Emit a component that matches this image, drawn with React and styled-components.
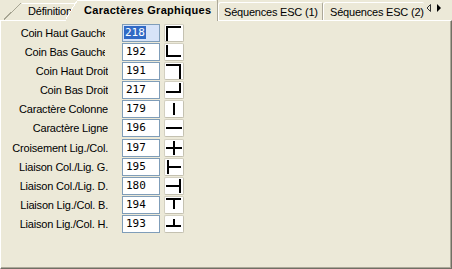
import React from 'react';
import styled, { createGlobalStyle } from 'styled-components';

const BG = '#ECE9D8';

const GlobalStyle = createGlobalStyle`
  html, body {
    margin: 0;
    padding: 0;
    background: ${BG};
  }
  body {
    font-family: "Liberation Sans", Arial, sans-serif;
    font-size: 11px;
    color: #000;
  }
`;

const ROWS = [
  { label: 'Coin Haut Gauche', code: '218', clipped: true, selected: true, bars: [[1, 1, 2, 15], [1, 1, 15, 2]] },
  { label: 'Coin Bas Gauche', code: '192', clipped: true, bars: [[1, 1, 2, 12], [1, 11, 15, 2]] },
  { label: 'Coin Haut Droit', code: '191', bars: [[1, 1, 15, 2], [14, 1, 2, 15]] },
  { label: 'Coin Bas Droit', code: '217', bars: [[14, 1, 2, 10], [1, 9, 15, 2]] },
  { label: 'Caractère Colonne', code: '179', bars: [[8, 2, 2, 12]] },
  { label: 'Caractère Ligne', code: '196', bars: [[1, 7, 16, 2]] },
  { label: 'Croisement Lig./Col.', code: '197', bars: [[1, 7, 16, 2], [8, 1, 2, 14]] },
  { label: 'Liaison Col./Lig. G.', code: '195', bars: [[2, 1, 2, 14], [2, 7, 14, 2]] },
  { label: 'Liaison Col./Lig. D.', code: '180', bars: [[14, 1, 2, 14], [1, 7, 14, 2]] },
  { label: 'Liaison Lig./Col. B.', code: '194', bars: [[1, 1, 15, 2], [8, 1, 2, 11]] },
  { label: 'Liaison Lig./Col. H.', code: '193', bars: [[8, 3, 2, 8], [1, 9, 15, 2]] },
];

const Window = styled.div`
  width: 452px;
  height: 269px;
  background: ${BG};
  overflow: hidden;
`;

const TabStrip = styled.div`
  display: flex;
  align-items: flex-end;
  height: 20px;
`;

const Tab = styled.div`
  position: relative;
  flex: none;
  box-sizing: border-box;
  height: 18px;
  padding: 3px 0 0 6px;
  white-space: nowrap;
  overflow: hidden;
  letter-spacing: -0.2px;
  background: ${BG};
  border-top: 1px solid #fff;
  border-left: 1px solid #fff;
  border-right: 1px solid #ACA899;
  border-top-left-radius: 3px;
  border-top-right-radius: 2px;
`;

const SlantTab = styled(Tab)`
  margin-left: 4px;
  width: 72px;
  height: 17px;
  padding: 2px 0 0 24px;
  border: none;
  border-radius: 0;
  background:
    linear-gradient(#fff, #fff) no-repeat 18px 0 / calc(100% - 18px) 1px,
    linear-gradient(to bottom right, transparent calc(50% - 1px), #A7A593 calc(50% - 1px), #A7A593 50%, transparent 50%) no-repeat 0 0 / 18px 100%;
`;

const ActiveTab = styled(Tab)`
  z-index: 1;
  margin-left: -10px;
  margin-bottom: -1px;
  width: 152px;
  height: 21px;
  padding: 4px 0 0 18px;
  font-weight: bold;
  letter-spacing: 0.3px;
  border: none;
  border-radius: 0;
  box-shadow: inset -1px 0 0 #ACA899;
  background:
    linear-gradient(#fff, #fff) no-repeat 12px 0 / calc(100% - 14px) 1px,
    linear-gradient(to bottom right, transparent calc(50% - 1px), #fff calc(50% - 1px), #fff 50%, ${BG} 50%) no-repeat 0 0 / 12px 20px,
    linear-gradient(${BG}, ${BG}) no-repeat 12px 0 / calc(100% - 12px) 100%,
    linear-gradient(${BG}, ${BG}) no-repeat 0 20px / 100% 1px;
`;

const SeqTab = styled(Tab)`
  width: ${p => p.$width}px;
  padding-left: ${p => p.$pad}px;
  ${p => p.$cut && 'border-right: none;'}
`;

const Scroller = styled.div`
  flex: none;
  display: flex;
  align-items: flex-start;
  width: 28px;
  height: 20px;
  background: ${BG};
`;

const Panel = styled.div`
  box-sizing: border-box;
  height: 249px;
  border-top: 1px solid #fff;
  border-left: 1px solid #fff;
  border-right: 1px solid #716F64;
  border-bottom: 1px solid #716F64;
  box-shadow: inset -1px -1px 0 #ACA899;
  padding: 3px 0 0 7px;
`;

const Rows = styled.div`
  display: flex;
  flex-direction: column;
  gap: 1.1px;
`;

const Row = styled.div`
  display: flex;
  align-items: center;
  height: 18px;
`;

const Label = styled.div`
  flex: none;
  width: 100px;
  margin-right: 14px;
  text-align: right;
  white-space: nowrap;
  overflow: hidden;
  letter-spacing: -0.2px;
  ${p => p.$clipped && 'clip-path: inset(0 3px 0 0);'}
`;

const Edit = styled.div`
  flex: none;
  box-sizing: border-box;
  width: 38px;
  height: 18px;
  padding: 0 0 0 1px;
  border: 1px solid #7F9DB9;
  background: ${p => (p.$focused ? '#D7E3F8' : '#fff')};
  font-family: "DejaVu Sans Mono", "Liberation Mono", monospace;
  font-size: 11px;
  line-height: 16px;
`;

const Selection = styled.span`
  display: inline-block;
  margin-top: 1px;
  padding: 0 1px;
  line-height: 13px;
  background: #316AC5;
  color: #fff;
`;

const Value = styled.span`
  padding-left: 2px;
`;

const Preview = styled.div`
  flex: none;
  box-sizing: border-box;
  width: 20px;
  height: 18px;
  margin-left: 4px;
  border: 1px solid #D3D0C1;
  border-right-color: #C4C1B1;
  border-bottom-color: #C4C1B1;
  border-radius: 2px;
  background: #fff;
  svg {
    display: block;
  }
`;

const BoxGlyph = ({ bars }) => (
  <svg width="18" height="16" viewBox="0 0 18 16">
    {bars.map(([x, y, w, h], i) => (
      <rect key={i} x={x} y={y} width={w} height={h} fill="#000" />
    ))}
  </svg>
);

const App = () => {
  return (
    <Window>
      <GlobalStyle />
      <TabStrip>
        <SlantTab>Définition</SlantTab>
        <ActiveTab>Caractères Graphiques</ActiveTab>
        <SeqTab $width={105} $pad={5}>Séquences ESC (1)</SeqTab>
        <SeqTab $width={101} $pad={6} $cut>Séquences ESC (2)</SeqTab>
        <Scroller>
          <svg width="28" height="20" viewBox="0 0 28 20">
            <polygon points="6.5,4.5 6.5,11.5 3,8" fill="none" stroke="#333" strokeWidth="1" />
            <polygon points="13,4 13,12 17,8" fill="#000" />
          </svg>
        </Scroller>
      </TabStrip>
      <Panel>
        <Rows>
          {ROWS.map(r => (
            <Row key={r.code}>
              <Label $clipped={r.clipped}>{r.label}</Label>
              <Edit $focused={r.selected}>
                {r.selected ? <Selection>{r.code}</Selection> : <Value>{r.code}</Value>}
              </Edit>
              <Preview>
                <BoxGlyph bars={r.bars} />
              </Preview>
            </Row>
          ))}
        </Rows>
      </Panel>
    </Window>
  );
};

export default App;
